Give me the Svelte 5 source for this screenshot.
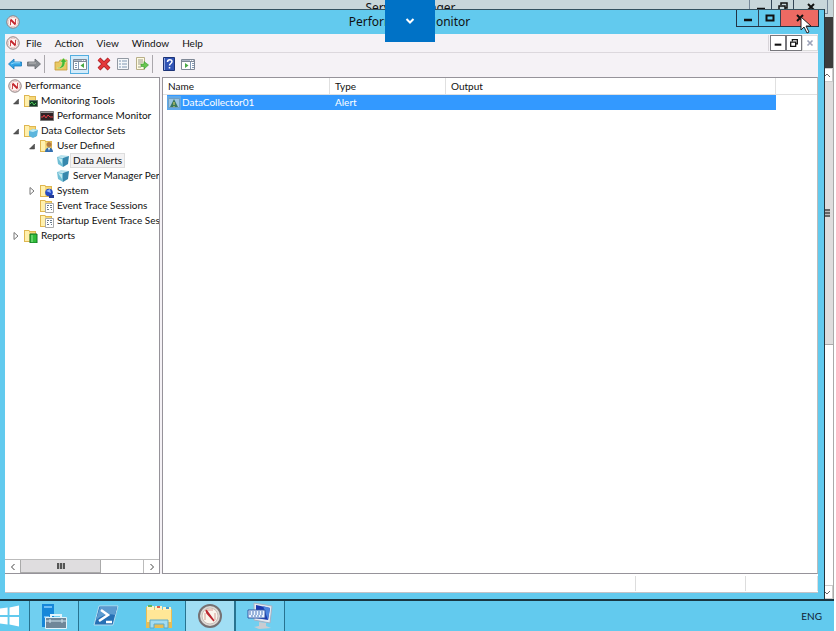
<script>
  const menus = ['File', 'Action', 'View', 'Window', 'Help'];

  const tools = [
    { icon: 'back', label: 'Back' },
    { icon: 'forward', label: 'Forward' },
    { separator: true },
    { icon: 'up', label: 'Up one level' },
    { icon: 'tree', label: 'Show/Hide Console Tree', active: true },
    { gap: true },
    { icon: 'delete', label: 'Delete' },
    { icon: 'properties', label: 'Properties' },
    { icon: 'export', label: 'Export List' },
    { separator: true },
    { icon: 'help', label: 'Help' },
    { icon: 'actions', label: 'Show/Hide Action Pane' }
  ];

  const nodes = [
    { label: 'Performance', icon: 'gauge', level: 0 },
    { label: 'Monitoring Tools', icon: 'tools', level: 1, open: true },
    { label: 'Performance Monitor', icon: 'graph', level: 2 },
    { label: 'Data Collector Sets', icon: 'sets', level: 1, open: true },
    { label: 'User Defined', icon: 'user', level: 2, open: true },
    { label: 'Data Alerts', icon: 'cube', level: 3 },
    { label: 'Server Manager Per', icon: 'cube', level: 3 },
    { label: 'System', icon: 'system', level: 2, open: false },
    { label: 'Event Trace Sessions', icon: 'trace', level: 2 },
    { label: 'Startup Event Trace Ses', icon: 'trace', level: 2 },
    { label: 'Reports', icon: 'reports', level: 1, open: false }
  ];

  const apps = [
    { icon: 'server', label: 'Server Manager', running: true },
    { icon: 'powershell', label: 'Windows PowerShell' },
    { icon: 'explorer', label: 'File Explorer' },
    { icon: 'gauge', label: 'Performance Monitor', running: true, active: true },
    { icon: 'remote', label: 'On-Screen Keyboard', running: true }
  ];

  let selected = $state('Data Alerts');
</script>

{#snippet folder()}
  <path d="M0 1h5l1 1h6v11H0z" fill="#dfb650" />
  <path d="M1 2h4v10H1z" fill="#fff0ad" />
  <path d="M5 3h6v9H5z" fill="#f5d778" />
{/snippet}

{#snippet icon(name)}
  <svg class="icon" viewBox="0 0 14 14" aria-hidden="true">
    {#if name === 'gauge'}
      <circle cx="7" cy="7" r="6.2" fill="#fff" stroke="#8b7777" />
      <circle cx="7" cy="7" r="4.8" fill="#fff5f2" stroke="#dba09c" stroke-width=".6" />
      <path d="M4.500 10V5M9.500 9V4" fill="none" stroke="#c94a4e" />
      <path d="m4.500 4.500 5 5" fill="none" stroke="#c4232b" stroke-width="1.8" />
    {:else if name === 'back'}
      <path d="M.5 7 6 2v3h7.5v4H6v3z" fill="#34a4e5" stroke="#1778bb" stroke-width=".8" />
      <path d="M3 7 6 5.8h6" stroke="#92d9fb" fill="none" />
    {:else if name === 'forward'}
      <path d="M13.5 7 8 2v3H.5v4H8v3z" fill="#888b90" stroke="#65686d" stroke-width=".8" />
      <path d="M2 6h7" stroke="#bbb" />
    {:else if name === 'up'}
      <path d="M1 5h4l1-2h7v10H1z" fill="#e9c963" stroke="#c49b36" stroke-width=".8" />
      <path d="M3 11c4 0 5-3 5-6H6l3.5-4L13 5h-2c0 5-3 7-8 6z" fill="#45b835" stroke="#ecf7b6" stroke-width=".4" />
    {:else if name === 'tree' || name === 'actions'}
      <path d="M.5 2.5h13v10H.5z" fill="#fff" stroke="#7f8896" />
      <path d="M1 4.5h12" stroke="#7f8896" />
      <path d="M1 3.5h8m1 0h1m1 0h1" stroke="#adb7c7" />
      {#if name === 'tree'}
        <path d="M5.5 5v7M2 6.5h2M2 8.5h2M2 10.5h2" stroke="#8399b4" />
        <path d="M11 6v5L7.5 8.5z" fill="#49a943" />
      {:else}
        <path d="M9.5 5v7M11 6.5h2M11 8.5h2M11 10.5h2" stroke="#8399b4" />
        <path d="M4 6v5l3.5-2.5z" fill="#49a943" />
      {/if}
    {:else if name === 'delete'}
      <path d="m2 2 10 10M12 2 2 12" stroke="#9f2226" stroke-width="4" />
      <path d="m2 2 10 10M12 2 2 12" stroke="#e4373a" stroke-width="2.6" />
    {:else if name === 'properties'}
      <path d="M1.5 1.5h11v11h-11z" fill="#f4f7fa" stroke="#9299a2" />
      <path d="M3 4h2m1 0h5M3 7h2m1 0h5M3 10h2m1 0h5" stroke="#7f96b1" />
    {:else if name === 'export'}
      <path d="M1.5.5h8v12h-8z" fill="#fffbe2" stroke="#b8af89" />
      <path d="M3 3h5M3 5h5M3 7h3M3 10h3" stroke="#9b9b8f" />
      <path d="M6 7h3V4.5L13.5 8 9 12V9.5H6z" fill="#67c64f" stroke="#36952d" stroke-width=".6" />
    {:else if name === 'help'}
      <path d="M1.5.5h11v13h-11z" fill="#3154b5" stroke="#1c3377" />
      <path d="M2.5 1v12" stroke="#94a9e2" />
      <path d="M5.5 5c0-3 4.5-3 4.5-.5C10 6.500 7.500 6.500 7.500 8.500M7.500 10v1.500" fill="none" stroke="#fff" stroke-width="1.500" />
    {:else if name === 'graph'}
      <path d="M.5 2.500h13v9H.5z" fill="#302225" stroke="#777" />
      <path d="M1 3.500h12" stroke="#999" />
      <path d="M1 8h2l1-2 2 3 2-3 2 2h3" fill="none" stroke="#e13d45" />
    {:else if name === 'cube'}
      <path d="m1 3 4-2 8 1-3 2z" fill="#b7e2ed" />
      <path d="m1 3 6 1v9L2 10z" fill="#70bed5" />
      <path d="m7 4 6-2-1 8-5 3z" fill="#3788ad" />
      <path d="m2 4 4 1v5z" fill="#c2eaf1" />
    {:else if name === 'tools'}
      {@render folder()}
      <path d="M5.500 6.500h8v6h-8z" fill="#143d25" stroke="#667568" />
      <path d="m6 10 2-2 2 3 2-2" stroke="#50c85a" fill="none" />
    {:else if name === 'sets'}
      {@render folder()}
      <path d="m5 7 4-2 5 1-1 6-4 2-4-2z" fill="#5cb5dd" />
      <path d="m5 7 4 1 5-2-5-1z" fill="#bdeaf5" />
    {:else if name === 'user'}
      {@render folder()}
      <circle cx="9" cy="5.500" r="2.500" fill="#b47d43" />
      <path d="M5 13c0-6 8-6 8 0z" fill="#326dae" />
      <path d="m8 9 1 3 1-3" fill="#fff" />
    {:else if name === 'system'}
      {@render folder()}
      <circle cx="9" cy="8.500" r="3.800" fill="#244ac4" />
      <path d="m6 7 4-2 1 4z" fill="#91b3fa" />
      <path d="M9 11h5v3H9z" fill="#263c94" />
    {:else if name === 'trace'}
      {@render folder()}
      <path d="M5.500 4.500h8v9h-8z" fill="#fff" stroke="#aaa" />
      <path d="M7 6.500h2m1 0h2M7 8.500h1m2 0h2M7 10.500h2m2 0h1" stroke="#697b8d" />
    {:else if name === 'reports'}
      {@render folder()}
      <path d="M6 5h7v9H6z" fill="#2fbc38" stroke="#137524" />
      <path d="M8 6v7" stroke="#9ae79b" />
    {:else if name === 'alert'}
      <path d="M0 0h14v14H0z" fill="#5fa9ea" />
      <path d="M1.500 2.500h11v9h-11z" fill="#9cc5e2" stroke="#6f9fc4" />
      <path d="m7 3 4 8H3z" fill="#39765c" />
      <path d="M7 6v3m0 1v1" stroke="#e5db65" />
    {/if}
  </svg>
{/snippet}

{#snippet appIcon(name)}
  <svg class="app-icon" viewBox="0 0 28 28" aria-hidden="true">
    {#if name === 'server'}
      <path d="M2 2h12v23H2z" fill="#1687d9" />
      <path d="M4 5h8M4 15h5" stroke="#8bd1ff" stroke-width="1.500" />
      <path d="M11 16v-3h10v3" fill="none" stroke="#dff4fc" stroke-width="2" />
      <path d="M5.500 15.500h21v11h-21z" fill="#6f8799" stroke="#e0f3fb" />
      <path d="M6 19h20M10 17v4m12-4v4" stroke="#d2e6f0" />
    {:else if name === 'powershell'}
      <path d="M7 4h19l-5 19H2z" fill="#2670b5" stroke="#b6dcef" />
      <path d="M8 5h17l-2 8C17 11 10 13 4 18z" fill="#5b9bd0" />
      <path d="m9 8 7 5-9 6M14 20h6" fill="none" stroke="#fff" stroke-width="2.500" />
    {:else if name === 'explorer'}
      <path d="M1 5h8l2 2h16v19H1z" fill="#e8bd54" />
      <path d="M2 4h7v4H2z" fill="#fff2c0" />
      <path d="M3 3h4v2H3z" fill="#60b45b" />
      <path d="M10 4h7v4h-7z" fill="#fff2c0" />
      <path d="M12 4h3v2h-3z" fill="#dc5c49" />
      <path d="M18 5h8v4h-8z" fill="#fff2c0" />
      <path d="M21 5h3v2h-3z" fill="#4999cf" />
      <path d="M2 8h24v12H2z" fill="#ffe797" />
      <path d="M5 26v-8h18v8h-4v-4H9v4z" fill="#a4dcf1" stroke="#5daac9" />
    {:else if name === 'gauge'}
      <circle cx="14" cy="14" r="11" fill="#ded9d5" stroke="#767173" stroke-width="2" />
      <circle cx="14" cy="14" r="8" fill="#faf5ed" stroke="#c9bfb9" />
      <path d="M9 18v-7m10 7v-7M11 8h6" stroke="#d69e95" fill="none" />
      <path d="m10 8 8 11-7-8z" fill="#bb2830" stroke="#bb2830" stroke-width="1.500" />
    {:else if name === 'remote'}
      <path d="m8 1 18 3-2 17-16-3z" fill="#e4e9f1" stroke="#a4b0c3" />
      <path d="m10 3 14 3-2 12-12-2z" fill="#1c39ae" />
      <path d="m17 4 7 2-2 12z" fill="#4c83de" />
      <path d="M2 8h17v8H2z" fill="#edf4ff" stroke="#3158a7" />
      <path d="M3 10h15M3 12h15M5 14h11" stroke="#4a76ba" stroke-dasharray="2 1" />
      <path d="m13 20 7 1v3l5 2-12 1-5-2 5-1z" fill="#c9ccd2" />
    {/if}
  </svg>
{/snippet}

{#snippet glyph(name)}
  <svg class="glyph" viewBox="0 0 12 12" fill="none" stroke="currentColor" aria-hidden="true">
    {#if name === 'minimize'}
      <path d="M2 8h8" stroke-width="2.500" />
    {:else if name === 'maximize'}
      <path d="M2.500 3.500h7v5h-7z" stroke-width="2" />
    {:else if name === 'restore'}
      <path d="M4 4V2h6v5H8M2 5h6v5H2z" stroke-width="1.500" />
    {:else if name === 'close'}
      <path d="m3 3 6 6M9 3 3 9" stroke-width="2" />
    {:else if name === 'left'}
      <path d="M7.500 3 4.500 6l3 3" />
    {:else if name === 'right'}
      <path d="m4.500 3 3 3-3 3" />
    {:else if name === 'up'}
      <path d="m3 8 3-3 3 3" />
    {:else if name === 'down'}
      <path d="m3 5 3 3 3-3" />
    {/if}
  </svg>
{/snippet}

{#snippet controls(middle)}
  <div class="window-controls">
    <button aria-label="Minimize">{@render glyph('minimize')}</button>
    <button aria-label="Maximize">{@render glyph(middle)}</button>
    <button class="close" aria-label="Close">{@render glyph('close')}</button>
  </div>
{/snippet}

<div class="desktop">
  <div class="workspace">
    <section class="back-window" aria-label="Server Manager">
      <header class="back-title">
        <span class="title">Server Manager</span>
        {@render controls('restore')}
      </header>
      <div class="back-banner"></div>
      <div class="back-scroll">
        <button aria-label="Scroll up">{@render glyph('up')}</button>
        <div class="back-thumb"><i></i></div>
        <div class="back-track"></div>
        <button aria-label="Scroll down">{@render glyph('down')}</button>
      </div>
    </section>

    <section class="window" aria-label="Performance Monitor">
      <header class="titlebar">
        <span class="title-icon">{@render icon('gauge')}</span>
        <h1 class="title">Performance Monitor</h1>
        {@render controls('maximize')}
      </header>

      <div class="client">
        <nav class="menubar">
          {@render icon('gauge')}
          <div class="menus">
            {#each menus as menu (menu)}
              <button>{menu}</button>
            {/each}
          </div>
          <div class="child-controls">
            <button aria-label="Minimize console">{@render glyph('minimize')}</button>
            <button aria-label="Restore console">{@render glyph('restore')}</button>
            <button aria-label="Close console" disabled>{@render glyph('close')}</button>
          </div>
        </nav>

        <div class="toolbar">
          {#each tools as tool}
            {#if tool.separator}
              <span class="separator"></span>
            {:else if tool.gap}
              <span class="tool-gap"></span>
            {:else}
              <button class:active={tool.active} aria-label={tool.label}>{@render icon(tool.icon)}</button>
            {/if}
          {/each}
        </div>

        <div class="panes">
          <aside class="tree-pane">
            <ul class="tree">
              {#each nodes as node (node.label)}
                <li class="level-{node.level}">
                  {#if node.level > 0}
                    <span class="expander">
                      {#if node.open !== undefined}
                        <svg viewBox="0 0 8 8" aria-hidden="true">
                          {#if node.open}
                            <path d="M6.500 2v5H1.500z" fill="#555" stroke="#333" stroke-width=".5" />
                          {:else}
                            <path d="m2 .5 4 3.500-4 3.500z" fill="#fff" stroke="#777" />
                          {/if}
                        </svg>
                      {/if}
                    </span>
                  {/if}
                  {@render icon(node.icon)}
                  <button class:selected={selected === node.label} onclick={() => (selected = node.label)}>
                    {node.label}
                  </button>
                </li>
              {/each}
            </ul>
            <div class="hscroll">
              <button aria-label="Scroll left">{@render glyph('left')}</button>
              <div class="hthumb"><i></i></div>
              <div class="htrack"></div>
              <button aria-label="Scroll right">{@render glyph('right')}</button>
            </div>
          </aside>

          <main class="list-pane">
            <table>
              <colgroup>
                <col class="col-name" />
                <col class="col-type" />
                <col />
                <col class="col-rest" />
              </colgroup>
              <thead>
                <tr>
                  <th>Name</th>
                  <th>Type</th>
                  <th>Output</th>
                  <td></td>
                </tr>
              </thead>
              <tbody>
                <tr>
                  <td><span class="name-cell">{@render icon('alert')}DataCollector01</span></td>
                  <td>Alert</td>
                  <td></td>
                  <td></td>
                </tr>
              </tbody>
            </table>
          </main>
        </div>

        <footer class="statusbar">
          <span></span>
          <span></span>
          <span></span>
        </footer>
      </div>
    </section>
  </div>

  <footer class="taskbar">
    <button class="start" aria-label="Start">
      <svg viewBox="0 0 20 22" aria-hidden="true">
        <path d="M0 3l8-1v8H0zM10 2l10-2v10H10zM0 12h8v8l-8-1zM10 12h10v10l-10-2z" fill="#fff" />
      </svg>
    </button>
    {#each apps as app (app.label)}
      <button class="app" class:running={app.running} class:active={app.active} aria-label={app.label}>
        {@render appIcon(app.icon)}
      </button>
    {/each}
    <span class="language">ENG</span>
  </footer>

  <button class="session-tab" aria-label="Show connection bar">
    <svg viewBox="0 0 10 8" aria-hidden="true">
      <path d="m1.500 2 3.500 3.500L8.500 2" fill="none" stroke="#fff" stroke-width="2" />
    </svg>
  </button>
  <svg class="cursor" viewBox="0 0 12 18" aria-hidden="true">
    <path d="M1 1v13l3-3 3 6 2-1-3-6h5z" fill="#fff" stroke="#222" />
  </svg>
</div>

<style>
  :global(body) {
    margin: 0;
    background: #fff;
  }

  .desktop {
    position: relative;
    display: flex;
    flex-direction: column;
    height: 100vh;
    margin-right: 2px;
    overflow: hidden;
    font-family: Lato, Roboto, 'Liberation Sans', sans-serif;
    font-size: 10px;
    line-height: 15px;
    color: #111;
  }

  .desktop * {
    box-sizing: border-box;
  }

  button {
    display: flex;
    align-items: center;
    justify-content: center;
    flex: none;
    margin: 0;
    padding: 0;
    border: 0;
    background: none;
    color: inherit;
    font: inherit;
  }

  .icon {
    display: block;
    flex: none;
    width: 14px;
    height: 14px;
  }

  .glyph {
    flex: none;
    width: 12px;
    height: 12px;
  }

  .workspace {
    display: grid;
    flex: 1;
    min-height: 0;
  }

  .back-window,
  .window {
    display: flex;
    flex-direction: column;
    grid-area: 1 / 1;
    min-width: 0;
    min-height: 0;
  }

  .back-window {
    border-right: 1px solid #aaa;
    background: #c8d6da;
  }

  .back-title,
  .titlebar {
    display: grid;
    flex: none;
  }

  .back-title > *,
  .titlebar > * {
    grid-area: 1 / 1;
  }

  .back-title {
    height: 17px;
  }

  .title {
    justify-self: center;
    margin: 0;
    font-family: 'Noto Sans', 'Open Sans', sans-serif;
    font-size: 12px;
    font-weight: 400;
    line-height: 16px;
    white-space: nowrap;
  }

  .back-title .title {
    margin-right: 12px;
  }

  .window-controls {
    display: flex;
    justify-self: end;
    align-self: start;
    border: 1px solid #234;
    border-top: 0;
    color: #111;
  }

  .window-controls button {
    width: 22px;
    height: 16px;
    border-right: 1px solid #345;
  }

  .window-controls .close {
    width: 37px;
    border-right: 0;
  }

  .back-title .window-controls {
    height: 14px;
    margin-right: 5px;
    border-color: #789;
  }

  .back-title .window-controls button {
    height: 13px;
  }

  .back-title .window-controls .close {
    width: 33px;
  }

  .titlebar .close {
    background: #ed6a63;
  }

  .back-banner {
    flex: none;
    width: 10px;
    height: 51px;
    align-self: flex-end;
    background: #3c3c3c;
  }

  .back-scroll {
    display: flex;
    flex: 1;
    flex-direction: column;
    align-self: flex-end;
    width: 13px;
    background: #fff;
  }

  .back-scroll button {
    height: 14px;
    border: 1px solid #ccc;
    color: #666;
  }

  .back-thumb {
    display: flex;
    flex: 262;
    align-items: center;
    justify-content: center;
    border-bottom: 1px solid #aaa;
    background: #dfdddd;
  }

  .back-thumb i {
    width: 7px;
    height: 8px;
    background: repeating-linear-gradient(#666 0 2px, #bbb 2px 3px);
  }

  .back-track {
    flex: 240;
  }

  .window {
    z-index: 1;
    margin: 9px 9px 0 0;
    padding: 0 6px 6px 5px;
    border-top: 1px solid #34515f;
    border-right: 1px solid #23343c;
    background: #62caee;
  }

  .titlebar {
    height: 24px;
    margin: 0 -1px 0 -5px;
  }

  .titlebar .title {
    align-self: center;
  }

  .title-icon {
    align-self: center;
    margin-left: 6px;
  }

  .client {
    display: flex;
    flex: 1;
    flex-direction: column;
    min-height: 0;
    background: #f5f2f6;
  }

  .menubar {
    display: flex;
    flex: none;
    align-items: center;
    height: 19px;
    padding-left: 1px;
    border-bottom: 1px solid #dcd8dd;
  }

  .menus {
    display: flex;
    flex: 1;
    gap: 13px;
    margin-left: 6px;
  }

  .child-controls {
    display: flex;
    padding-left: 1px;
    border-left: 1px solid #d8d4d9;
  }

  .child-controls button {
    width: 16px;
    height: 16px;
    border: 1px solid #77777c;
    background: #fff;
    color: #111;
  }

  .child-controls .glyph {
    width: 10px;
    height: 10px;
  }

  .child-controls button:disabled {
    border-color: #ddd;
    color: #9ca2b8;
  }

  .toolbar {
    display: flex;
    flex: none;
    align-items: center;
    height: 24px;
    padding-bottom: 2px;
  }

  .toolbar button {
    width: 19px;
    height: 19px;
  }

  .toolbar .active {
    border: 1px solid #53aee0;
    background: #d3ebfa;
  }

  .separator {
    width: 1px;
    height: 18px;
    margin: 0 6px 0 1px;
    background: #aaa7ac;
  }

  .tool-gap {
    width: 5px;
  }

  .panes {
    display: flex;
    flex: 1;
    gap: 2px;
    min-height: 0;
  }

  .tree-pane {
    display: flex;
    flex: none;
    flex-direction: column;
    width: 155px;
    border: 1px solid #96939a;
    border-left-width: 0;
    background: #fff;
  }

  .tree {
    flex: 1;
    margin: 0;
    padding: 0;
    overflow: hidden;
    list-style: none;
  }

  .tree li {
    display: flex;
    align-items: center;
    height: 15px;
    padding-left: 3px;
  }

  .tree li.level-1 {
    padding-left: 7px;
  }

  .tree li.level-2 {
    padding-left: 23px;
  }

  .tree li.level-3 {
    padding-left: 39px;
  }

  .tree button {
    height: 15px;
    padding: 0 2px;
    border: 1px solid transparent;
    white-space: nowrap;
  }

  .tree .selected {
    border-color: #ddd;
    background: #f3f2f3;
  }

  .expander {
    display: flex;
    flex: none;
    width: 12px;
  }

  .expander svg {
    width: 8px;
    height: 8px;
  }

  .hscroll {
    display: flex;
    flex: none;
    height: 14px;
    border-top: 1px solid #bbb;
    color: #444;
  }

  .hscroll button {
    width: 15px;
  }

  .hthumb {
    display: flex;
    align-items: center;
    justify-content: center;
    width: 81px;
    border: 1px solid #aaa;
    border-top: 0;
    background: #dfdddf;
  }

  .hthumb i {
    width: 8px;
    height: 6px;
    background: repeating-linear-gradient(90deg, #555 0 2px, #bbb 2px 3px);
  }

  .htrack {
    flex: 1;
    border-right: 1px solid #bbb;
  }

  .list-pane {
    flex: 1;
    min-width: 0;
    border: 1px solid #96939a;
    border-right-color: #bbb;
    background: #fff;
  }

  table {
    width: 100%;
    border-collapse: separate;
    border-spacing: 0;
    table-layout: fixed;
  }

  .col-name {
    width: 167px;
  }

  .col-type {
    width: 116px;
  }

  .col-rest {
    width: 41px;
  }

  th,
  td {
    height: 15px;
    padding: 0 5px;
    font-weight: 400;
    line-height: 15px;
    text-align: left;
  }

  thead th,
  thead td {
    height: 17px;
    border-bottom: 1px solid #e0e0e0;
  }

  th {
    border-right: 1px solid #e0e0e0;
  }

  tbody td {
    background: #3399ff;
    color: #fff;
  }

  tbody td:first-child {
    padding-left: 0;
    border-left: 4px solid #fff;
  }

  tbody td:last-child {
    background: #fff;
  }

  .name-cell {
    display: flex;
    align-items: center;
    gap: 1px;
  }

  .statusbar {
    display: flex;
    flex: none;
    height: 19px;
    padding: 2px 0 1px;
    border-bottom: 1px solid #c5c3c7;
    background: #fff;
  }

  .statusbar span {
    width: 110px;
    border-right: 1px solid #ddd;
  }

  .statusbar span:first-child {
    flex: 1;
  }

  .statusbar span:last-child {
    width: 72px;
  }

  .taskbar {
    display: flex;
    flex: none;
    height: 32px;
    border-top: 2px solid #183642;
    background: #62caee;
  }

  .start {
    justify-content: flex-start;
    width: 29px;
  }

  .start svg {
    width: 19px;
    height: 22px;
  }

  .app {
    width: 53px;
  }

  .app-icon {
    width: 28px;
    height: 28px;
  }

  .app.running {
    width: 50px;
    border: solid #287390;
    border-width: 0 1px;
    background: #70cff0;
  }

  .app.active {
    background: #a1def4;
  }

  .language {
    align-self: center;
    margin-left: auto;
    padding-right: 12px;
    color: #123;
  }

  .session-tab {
    position: absolute;
    z-index: 2;
    top: 0;
    left: calc(50% - 32px);
    width: 50px;
    height: 42px;
    background: #0072c6;
  }

  .session-tab svg {
    width: 10px;
    height: 8px;
  }

  .cursor {
    position: absolute;
    z-index: 3;
    top: 16px;
    right: 22px;
    width: 12px;
    height: 18px;
  }
</style>
